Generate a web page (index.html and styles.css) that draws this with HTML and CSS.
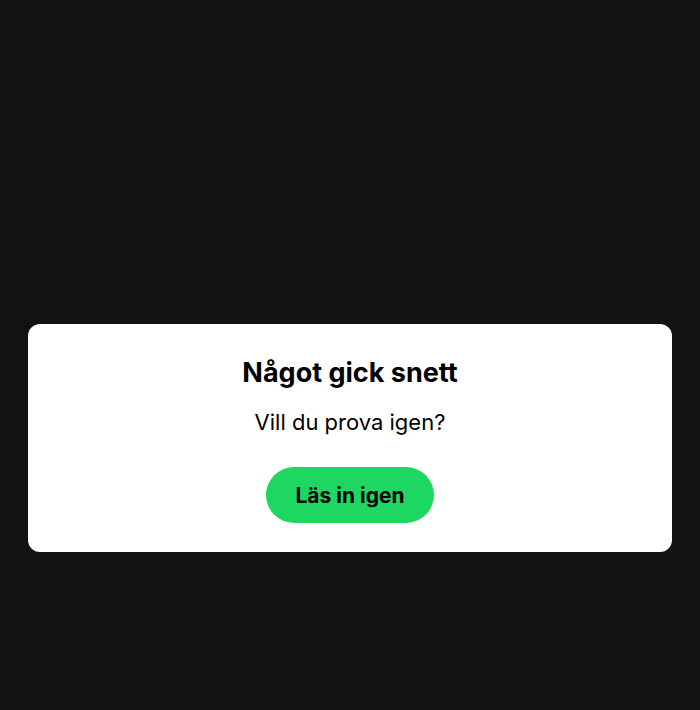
FILE: index.html
```html
<!DOCTYPE html>
<html lang="sv">
<head>
<meta charset="utf-8">
<title>Något gick snett</title>
<link rel="stylesheet" href="styles.css">
</head>
<body>
<main class="screen">
  <section class="error-card">
    <h1 class="error-title">Något gick snett</h1>
    <p class="error-text">Vill du prova igen?</p>
    <button class="retry-button" type="button">Läs in igen</button>
  </section>
</main>
</body>
</html>
```
FILE: styles.css
```css
html, body {
  margin: 0;
  height: 100%;
  background: #121212;
}

body {
  font-family: Inter, "Noto Sans", sans-serif;
  color: #000;
}

.screen {
  padding: 324px 28px 0;
}

.error-card {
  background: #fff;
  border-radius: 12px;
  height: 228px;
  box-sizing: border-box;
  padding: 32px 24px 0;
  display: flex;
  flex-direction: column;
  align-items: center;
}

.error-title {
  margin: 0;
  font-size: 27px;
  font-weight: 700;
  line-height: 34px;
  letter-spacing: 0;
}

.error-text {
  margin: 18px 0 0;
  font-size: 22px;
  font-weight: 400;
  line-height: 28px;
  letter-spacing: 0;
}

.retry-button {
  margin-top: 31px;
  width: 168px;
  height: 56px;
  padding: 0;
  border: 0;
  border-radius: 28px;
  background: #1ed760;
  color: #000;
  font-family: inherit;
  font-size: 21px;
  font-weight: 700;
  letter-spacing: 0;
}
```
